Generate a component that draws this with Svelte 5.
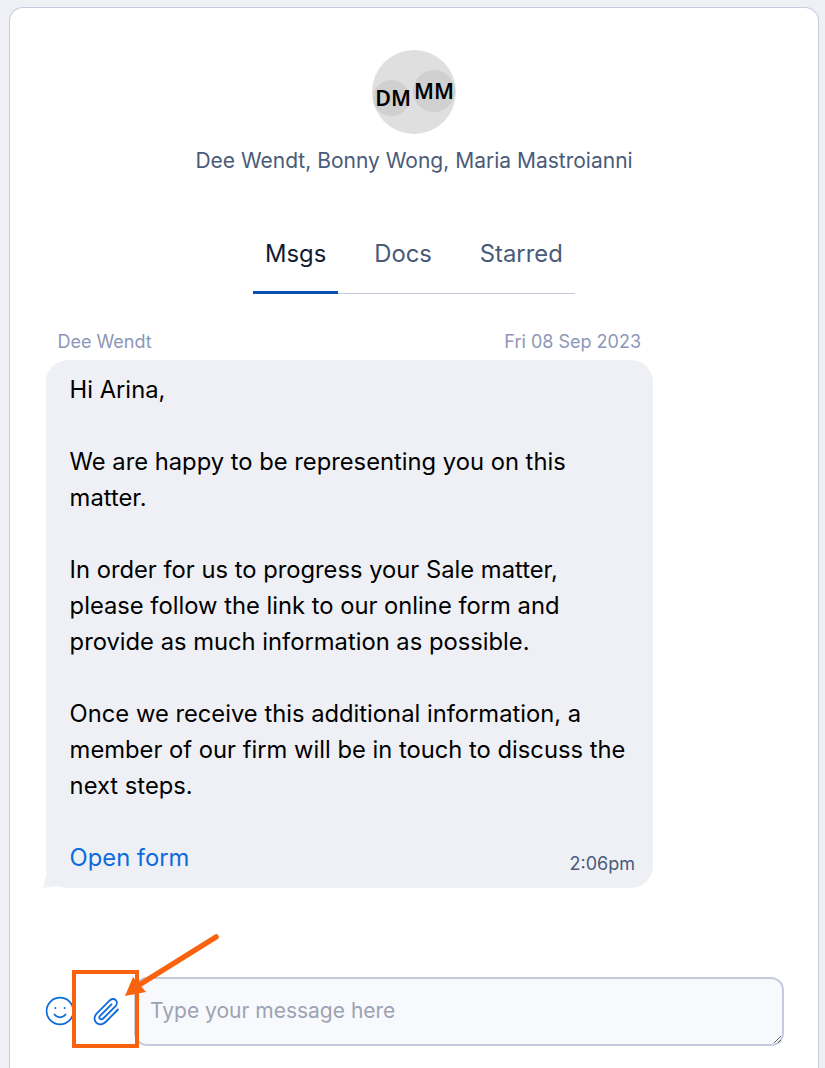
<script>
  let message = $state("");
  const paragraphs = [
    ["Hi Arina,"],
    ["We are happy to be representing you on this", "matter."],
    ["In order for us to progress your Sale matter,", "please follow the link to our online form and", "provide as much information as possible."],
    ["Once we receive this additional information, a", "member of our firm will be in touch to discuss the", "next steps."]
  ];
  const tabs = ["Msgs", "Docs", "Starred"];
</script>

<div class="card">
  <div class="avatars">
    <span class="mini dm">DM</span>
    <span class="mini mm">MM</span>
  </div>
  <p class="names">Dee Wendt, Bonny Wong, Maria Mastroianni</p>

  <nav class="tabs">
    {#each tabs as tab, i}
      <span class="tab" class:active={i === 0}>{tab}</span>
    {/each}
  </nav>

  <div class="thread">
    <div class="meta">
      <span>Dee Wendt</span>
      <span>Fri 08 Sep 2023</span>
    </div>
    <div class="bubble">
      {#each paragraphs as lines}
        <p>{#each lines as line}{line}<br />{/each}</p>
      {/each}
      <div class="bubble-foot">
        <a href="#form">Open form</a>
        <span class="time">2:06pm</span>
      </div>
      <svg class="tail" width="22" height="18" viewBox="0 0 22 18"><path d="M5 0 L1 17 Q10 15 22 15 Z" fill="#eff0f5" /></svg>
    </div>
  </div>

  <div class="composer">
    <button class="icon-btn emoji" aria-label="Emoji">
      <svg width="30" height="30" viewBox="0 0 30 30" fill="none" stroke="#0b6bdc" stroke-width="1.7" stroke-linecap="round">
        <circle cx="15" cy="15" r="13.4" />
        <circle cx="10.4" cy="12" r="1" fill="#0b6bdc" stroke="none" />
        <circle cx="19.6" cy="12" r="1" fill="#0b6bdc" stroke="none" />
        <path d="M9.5 18.5c1.4 1.900 3.300 2.800 5.500 2.800s4.100-.9 5.500-2.800" />
      </svg>
    </button>
    <button class="icon-btn clip" aria-label="Attach">
      <svg width="28" height="30" viewBox="0 0 28 30" fill="none" stroke="#0b6bdc" stroke-width="1.8" stroke-linecap="round" stroke-linejoin="round">
        <path d="M25 12.500 12.600 25c-2.900 2.900-7 3-9.400.6-2.400-2.400-2.300-6.300.6-9.200L16.500 3.600c2-2 4.700-2.100 6.300-.5s1.500 4.300-.5 6.300L10.200 21.500c-1 1-2.400 1.100-3.200.3s-.7-2.200.3-3.200L18.500 7.300" />
      </svg>
    </button>
    <textarea bind:value={message} placeholder="Type your message here"></textarea>
  </div>

  <!-- annotation drawn over the screenshot -->
  <div class="mark"></div>
  <svg class="arrow" width="100" height="70" viewBox="0 0 100 70">
    <path d="M96 3 L19 51" stroke="#f9630f" stroke-width="5.5" stroke-linecap="round" fill="none" />
    <path d="M5 62 L13 43 L26 58 Z" fill="#f9630f" />
  </svg>
</div>

<style>
  :global(body) {
    background: #eff0f6;
    font-family: "Inter", "Liberation Sans", sans-serif;
  }

  .card {
    position: relative;
    box-sizing: border-box;
    height: 1061px;
    margin: 7px 6px 0 9px;
    background: #fff;
    border: 1px solid #c5cbdf;
    border-bottom: none;
    border-radius: 14px 14px 0 0;
    display: flex;
    flex-direction: column;
    align-items: center;
    padding-top: 42px;
  }

  .avatars {
    position: relative;
    width: 84px;
    height: 84px;
    border-radius: 50%;
    background: #dfdfdf;
  }

  .mini {
    position: absolute;
    box-sizing: border-box;
    padding-bottom: 2px;
    display: flex;
    align-items: center;
    justify-content: center;
    border-radius: 50%;
    background: #d0d0d0;
    color: #000;
    font-family: "Noto Sans", sans-serif;
    font-weight: 600;
    font-size: 21.5px;
  }

  .dm {
    left: 1px;
    top: 30px;
    width: 37px;
    height: 36px;
    padding-left: 3px;
  }

  .mm {
    left: 41px;
    top: 20px;
    width: 42px;
    height: 42px;
  }

  .names {
    margin: 15px 0 0;
    font-size: 21px;
    line-height: 24px;
    color: #4a5b78;
  }

  .tabs {
    display: flex;
    width: 322px;
    margin-top: 66px;
    border-bottom: 1px solid #c5cbdf;
  }

  .tab {
    padding: 0 12px;
    margin-right: 24px;
    font-size: 23.8px;
    line-height: 29px;
    height: 54px;
    box-sizing: border-box;
    color: #4a5b78;
  }

  .tab.active {
    color: #111c33;
    margin-bottom: -1px;
    border-bottom: 3px solid #0b50ae;
    height: 55px;
  }

  .thread {
    align-self: flex-start;
    width: 607px;
    margin: 37px 0 0 36px;
  }

  .meta {
    display: flex;
    justify-content: space-between;
    padding: 0 12px 0 11.5px;
    font-size: 18px;
    line-height: 22px;
    color: #8c97b8;
  }

  .bubble {
    position: relative;
    margin-top: 7px;
    padding: 12px 24px 12px 23.6px;
    height: 528px;
    box-sizing: border-box;
    background: #eff0f5;
    border-radius: 22px;
    font-size: 23.75px;
    line-height: 36px;
    color: #000;
  }

  .bubble p {
    margin: 0 0 36px;
  }

  .bubble-foot {
    display: flex;
    justify-content: space-between;
    align-items: flex-end;
  }

  .bubble a {
    color: #0b6bdc;
    text-decoration: none;
  }

  .time {
    font-size: 18px;
    line-height: 24px;
    margin-right: -6px;
    color: #4a5b78;
  }

  .tail {
    position: absolute;
    left: -4px;
    bottom: -1px;
  }

  .composer {
    align-self: stretch;
    display: flex;
    align-items: center;
    margin: 89px 34px 0 35px;
  }

  .icon-btn {
    padding: 0;
    border: none;
    background: none;
    display: flex;
  }

  .emoji {
    margin-top: -2px;
  }

  .clip {
    margin: 0 13px 0 18px;
  }

  textarea {
    flex: 1;
    height: 69px;
    box-sizing: border-box;
    padding: 19px 14px;
    border: 2px solid #c5cbdf;
    border-radius: 13px;
    background: #f8f9fc;
    font-family: inherit;
    font-size: 21px;
    line-height: 26px;
    outline: none;
  }

  textarea::placeholder {
    color: #9ca3b3;
  }

  .mark {
    position: absolute;
    left: 62px;
    top: 962px;
    width: 67px;
    height: 78px;
    box-sizing: border-box;
    border: 4px solid #f9630f;
  }

  .arrow {
    position: absolute;
    left: 110px;
    top: 926px;
  }
</style>
